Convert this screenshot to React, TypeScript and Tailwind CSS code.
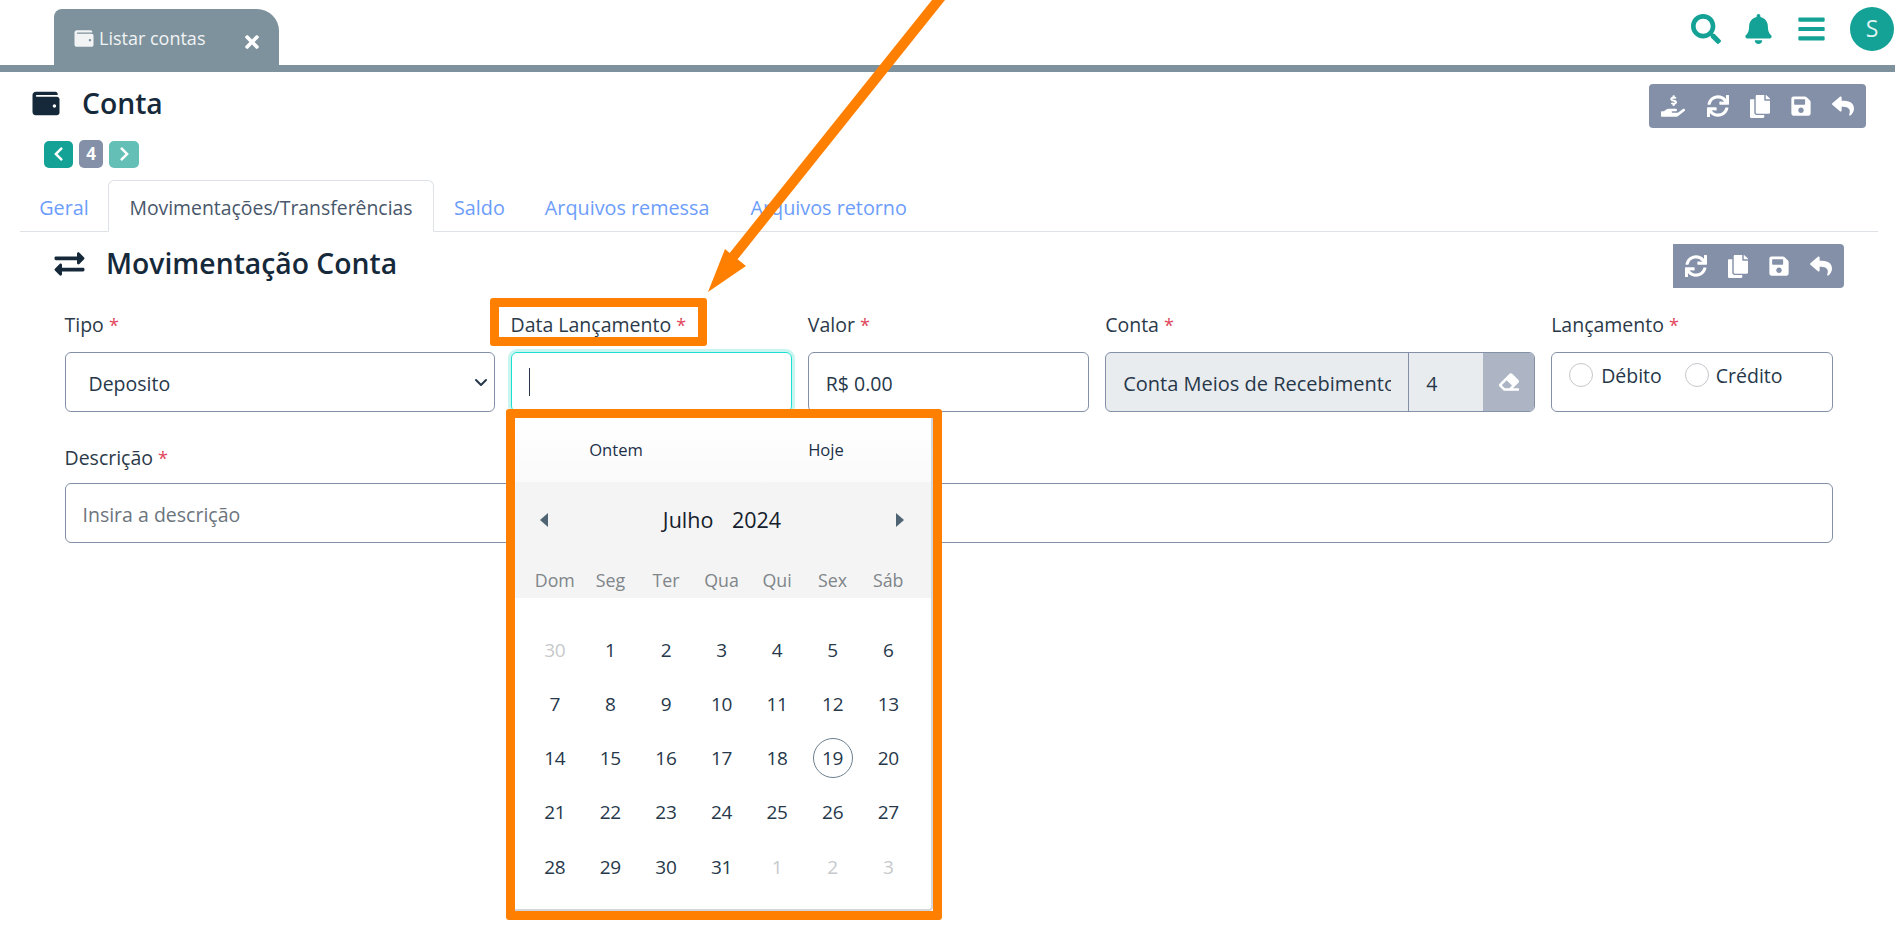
import {
  FaBars,
  FaBell,
  FaChevronLeft,
  FaChevronRight,
  FaCopy,
  FaEraser,
  FaExchangeAlt,
  FaHandHoldingUsd,
  FaReply,
  FaSave,
  FaSearch,
  FaSync,
  FaTimes,
  FaWallet,
} from 'react-icons/fa'

const weekdays = ['Dom', 'Seg', 'Ter', 'Qua', 'Qui', 'Sex', 'Sáb']

const days = [
  30, 1, 2, 3, 4, 5, 6,
  7, 8, 9, 10, 11, 12, 13,
  14, 15, 16, 17, 18, 19, 20,
  21, 22, 23, 24, 25, 26, 27,
  28, 29, 30, 31, 1, 2, 3,
]

function Label({ text }: { text: string }) {
  return (
    <label className="block h-[27px] text-[19.5px] leading-[27px] text-[#2b3a4a]">
      {text} <span className="text-[18px] text-[#e0455a]">*</span>
    </label>
  )
}

function Calendar() {
  return (
    <div className="absolute -left-[4.5px] top-[98px] z-10 h-[511px] w-[436px] rounded-[3px] border-[9px] border-[#ff8000] bg-white">
      <div className="h-full overflow-hidden rounded-br-[4px] border-r-[2px] border-b-[2px] border-[#d4d6dc]">
        <div className="-ml-[4px] grid h-[64px] w-[420px] grid-cols-2 items-center bg-gradient-to-b from-white to-[#fafafa] pt-[1px] text-center text-[16.6px] text-[#1c3148]">
          <span>Ontem</span>
          <span>Hoje</span>
        </div>
        <div className="h-[116px] bg-[#f4f4f4]">
          <div className="flex h-[76px] items-center justify-between pl-[25px] pr-[27px]">
            <svg width="8" height="14" viewBox="0 0 8 14"><path d="M8 0v14L0 7z" fill="#4f6472" /></svg>
            <span className="text-[21.5px] text-[#14202c]">
              Julho <span className="ml-[13px]">2024</span>
            </span>
            <svg width="8" height="14" viewBox="0 0 8 14"><path d="M0 0v14l8-7z" fill="#4f6472" /></svg>
          </div>
          <div className="grid grid-cols-7 pl-[12px] pr-[15px] pt-[10px] text-center text-[17.8px] leading-[24px] text-[#7f8589]">
            {weekdays.map((d) => (
              <span key={d}>{d}</span>
            ))}
          </div>
        </div>
        <div className="grid auto-rows-[54.2px] grid-cols-7 pl-[12px] pr-[15px] pt-[25px] text-center text-[19px] tracking-[-0.3px] text-[#26384a]">
          {days.map((d, i) => {
            const faded = i === 0 || i > 31
            return (
              <div key={i} className="flex items-center justify-center">
                <span
                  className={
                    i === 19
                      ? 'flex h-[40px] w-[40px] items-center justify-center rounded-full border border-[#6b7f8f]'
                      : faded
                        ? 'text-[#c7c9cc]'
                        : ''
                  }
                >
                  {d}
                </span>
              </div>
            )
          })}
        </div>
      </div>
    </div>
  )
}

export default function App() {
  return (
    <div className="relative h-[939px] w-full overflow-hidden bg-white font-['Open_Sans','Noto_Sans',sans-serif] text-[#212529]">
      {/* top bar */}
      <header className="flex h-[65px] items-end pl-[54px]">
        <div className="flex h-[56px] w-[225px] rounded-tl-[8px] rounded-tr-[22px] bg-[#7e929d] pl-[20px] text-[#f1f3f4]">
          <FaWallet className="mt-[20px] h-[19px] w-[20px]" />
          <span className="ml-[5px] mt-[17px] text-[18px] leading-[24px]">Listar contas</span>
          <FaTimes className="ml-[39px] mt-[23px] h-[20px] w-[16px] text-white" />
        </div>
        <div className="ml-auto flex h-[65px] items-center pb-[8px] text-[#13a295]">
          <FaSearch className="h-[30px] w-[30px]" />
          <FaBell className="ml-[24px] h-[30px] w-[27px]" />
          <FaBars className="ml-[26px] h-[30px] w-[27px]" />
          <div className="ml-[25px] mr-[1px] flex h-[44px] w-[44px] items-center justify-center rounded-full bg-[#13a295] text-[23px] text-[#dff3f1]">
            S
          </div>
        </div>
      </header>
      <div className="h-[7px] bg-[#7e929d]" />

      {/* page title */}
      <div className="flex items-start justify-between pl-[31px] pr-[29px] pt-[12px]">
        <div className="flex h-[38px] items-center text-[#15293a]">
          <FaWallet className="h-[27px] w-[30px]" />
          <h1 className="ml-[21px] text-[28.3px] font-semibold">Conta</h1>
        </div>
        <div className="flex h-[44px] items-center gap-[21px] rounded-[4px] bg-[#8390a8] px-[12px] text-white">
          <FaHandHoldingUsd className="mr-[1px] h-[24px] w-[24px]" />
          <FaSync className="h-[22px] w-[22px]" />
          <FaCopy className="h-[23px] w-[20px]" />
          <FaSave className="h-[22px] w-[20px]" />
          <FaReply className="h-[22px] w-[22px]" />
        </div>
      </div>

      {/* pager */}
      <div className="mt-[12px] flex h-[28px] items-center pl-[44px] text-white">
        <div className="flex h-[27px] w-[29px] items-center justify-center rounded-[5px] bg-[#13a295]">
          <FaChevronLeft className="h-[16px] w-[13px]" />
        </div>
        <div className="ml-[6px] flex h-[28px] w-[24px] items-center justify-center rounded-[5px] bg-[#8390a8] text-[17px] font-bold">
          4
        </div>
        <div className="ml-[6px] flex h-[27px] w-[30px] items-center justify-center rounded-[5px] bg-[#64c0b7]">
          <FaChevronRight className="h-[16px] w-[13px]" />
        </div>
      </div>

      {/* tabs */}
      <nav className="ml-[20px] mr-[17px] mt-[12px] flex h-[52px] items-stretch border-b border-[#dee2e6] text-[19.8px] text-[#6d9dfb]">
        <span className="flex w-[88px] items-center justify-center pt-[4px]">Geral</span>
        <span className="-mb-px flex w-[326px] items-center justify-center rounded-t-[6px] border border-[#dee2e6] border-b-white bg-white pt-[4px] text-[19.4px] text-[#48576a]">
          Movimentações/Transferências
        </span>
        <span className="ml-[20px] flex items-center pt-[4px]">Saldo</span>
        <span className="ml-[40px] flex items-center pt-[4px]">Arquivos remessa</span>
        <span className="ml-[41px] flex items-center pt-[4px]">Arquivos retorno</span>
      </nav>

      {/* section title */}
      <div className="flex items-start justify-between pl-[54px] pr-[51px] pt-[12px]">
        <div className="flex h-[39px] items-center text-[#15293a]">
          <FaExchangeAlt className="h-[30px] w-[31px]" />
          <h2 className="ml-[21px] text-[28.3px] font-semibold">Movimentação Conta</h2>
        </div>
        <div className="flex h-[44px] items-center gap-[21px] rounded-r-[4px] bg-[#8390a8] px-[12px] text-white">
          <FaSync className="h-[22px] w-[22px]" />
          <FaCopy className="h-[23px] w-[20px]" />
          <FaSave className="h-[22px] w-[20px]" />
          <FaReply className="h-[22px] w-[22px]" />
        </div>
      </div>

      {/* form */}
      <div className="ml-[64.5px] mr-[62.5px] mt-[23px] grid grid-cols-12 gap-x-4 text-[19.5px] text-[#26384a]">
        <div className="col-span-3">
          <Label text="Tipo" />
          <div className="mt-[14px] flex h-[60px] items-center justify-between rounded-[6px] border border-[#8390a8] pl-[23px] pr-[5px]">
            <span className="pt-[3px]">Deposito</span>
            <svg width="16" height="16" viewBox="0 0 16 16" fill="none" stroke="#26384a" strokeWidth="2" strokeLinecap="round" strokeLinejoin="round">
              <path d="M3 6l5 5 5-5" />
            </svg>
          </div>
        </div>
        <div className="relative col-span-2">
          <Label text="Data Lançamento" />
          <div className="mt-[14px] flex h-[60px] items-center rounded-[6px] border border-[#1adfd0] pl-[17px] shadow-[0_0_0_3px_#c9f5f0]">
            <div className="h-[28px] w-[1px] bg-[#26384a]" />
          </div>
          <div className="absolute -left-[20.5px] -top-[13px] h-[48px] w-[217px] rounded-[3px] border-[9px] border-[#ff8000]" />
          <Calendar />
        </div>
        <div className="col-span-2">
          <Label text="Valor" />
          <div className="mt-[14px] flex h-[60px] items-center rounded-[6px] border border-[#8390a8] pl-[17px]">
            <span className="pt-[3px]">R$ 0.00</span>
          </div>
        </div>
        <div className="col-span-3">
          <Label text="Conta" />
          <div className="mt-[14px] flex h-[60px] overflow-hidden rounded-[6px] border border-[#8390a8] bg-[#e9ecef]">
            <div className="flex w-[303px] items-center overflow-hidden border-r border-[#8390a8] pl-[17px] pr-[17px]">
              <span className="overflow-hidden whitespace-nowrap pt-[3px] text-[20px]">Conta Meios de Recebimento</span>
            </div>
            <div className="flex w-[74px] items-center pl-[17px] pt-[3px]">4</div>
            <div className="flex flex-1 items-center justify-center bg-[#adb5c4] text-white">
              <FaEraser className="h-[20px] w-[20px]" />
            </div>
          </div>
        </div>
        <div className="col-span-2">
          <Label text="Lançamento" />
          <div className="mt-[14px] flex h-[60px] items-start rounded-[6px] border border-[#8390a8] pl-[17px] pt-[10px]">
            <div className="h-[24px] w-[24px] rounded-full border border-[#c5c8cc]" />
            <span className="ml-[8px] pt-[1px] leading-[24px]">Débito</span>
            <div className="ml-[23px] h-[24px] w-[24px] rounded-full border border-[#c5c8cc]" />
            <span className="ml-[7px] pt-[1px] leading-[24px]">Crédito</span>
          </div>
        </div>
        <div className="col-span-12 mt-[32px]">
          <Label text="Descrição" />
          <div className="mt-[12px] flex h-[60px] items-center rounded-[6px] border border-[#8390a8] pl-[17px]">
            <span className="pt-[3px] text-[#6c757d]">Insira a descrição</span>
          </div>
        </div>
      </div>

      {/* seta de destaque */}
      <svg className="pointer-events-none absolute left-0 top-0 z-20" width="1895" height="939" viewBox="0 0 1895 939">
        <polygon points="932,0 945,0 737.6,259.3 746,266 708,292 725,249 729.7,252.9" fill="#ff8000" />
      </svg>
    </div>
  )
}
